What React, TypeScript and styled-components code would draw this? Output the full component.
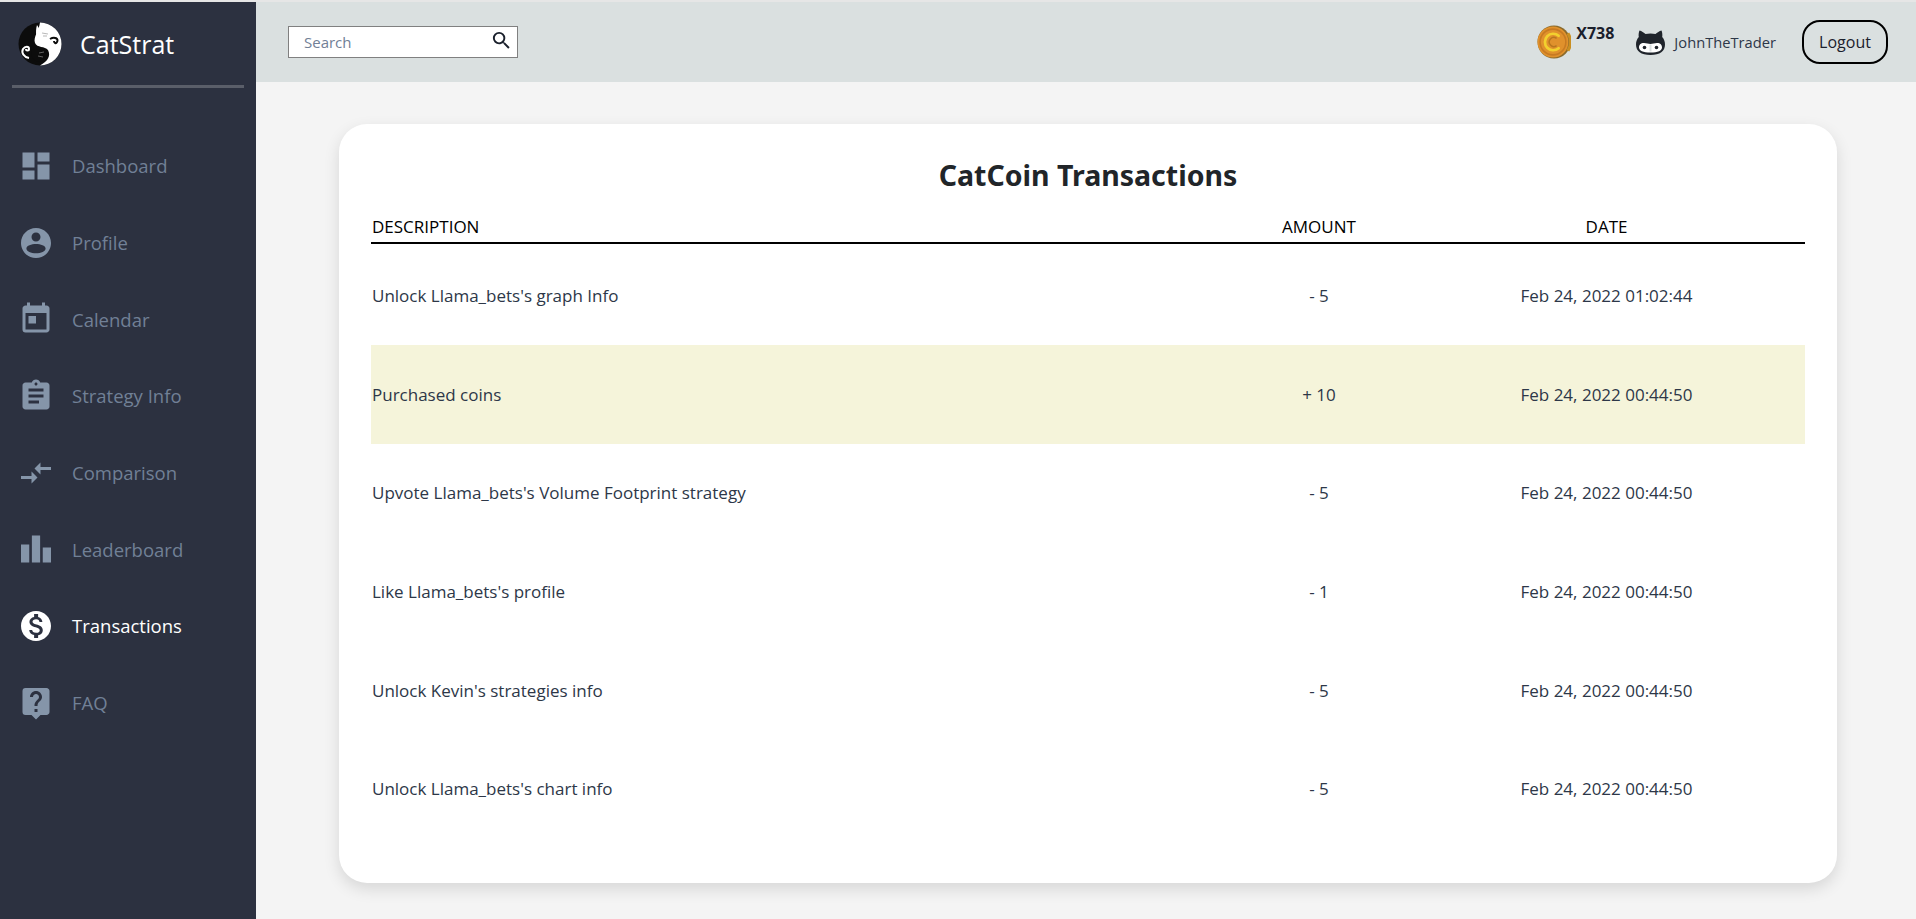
import React from "react";
import styled, { createGlobalStyle } from "styled-components";
import {
  MdAssignment,
  MdCompareArrows,
  MdDashboard,
  MdLeaderboard,
  MdLiveHelp,
  MdMonetizationOn,
  MdSearch,
  MdToday,
} from "react-icons/md";

const GlobalStyle = createGlobalStyle`
  html, body {
    margin: 0;
    height: 100%;
    background: #f4f4f4;
    overflow: hidden;
  }
  * { box-sizing: border-box; }
  #root { height: 100%; }
`;

const Page = styled.div`
  display: flex;
  flex-direction: column;
  height: 919px;
  font-family: "Open Sans", "Noto Sans", sans-serif;
  color: #2d3748;
`;

const TopStrip = styled.div`
  height: 2px;
  background: #e6e6e6;
  flex: none;
`;

const Shell = styled.div`
  display: flex;
  flex: 1;
  min-height: 0;
`;

const Sidebar = styled.aside`
  width: 256px;
  flex: none;
  background: #2c3140;
  padding: 0 12px;
`;

const Brand = styled.div`
  display: flex;
  align-items: center;
  gap: 18px;
  height: 86px;
  padding: 0 6px;
  border-bottom: 3px solid #5a5e69;
`;

const BrandName = styled.span`
  font-size: 25px;
  color: #fff;
`;

const NavList = styled.nav`
  display: flex;
  flex-direction: column;
  padding-top: 39.5px;
`;

const NavItem = styled.a<{ $active?: boolean }>`
  display: flex;
  align-items: center;
  gap: 20px;
  height: 76.7px;
  padding-left: 8px;
  font-size: 18.5px;
  color: ${(p) => (p.$active ? "#fff" : "#718096")};

  svg {
    width: 36px;
    height: 36px;
    margin-left: -2px;
    margin-right: -2px;
    flex: none;
    color: ${(p) => (p.$active ? "#fff" : "#8595a9")};
  }
`;

const Main = styled.div`
  flex: 1;
  display: flex;
  flex-direction: column;
  min-width: 0;
`;

const TopBar = styled.header`
  height: 80px;
  flex: none;
  background: #dae0e0;
  display: flex;
  align-items: center;
  padding: 0 28px 0 32px;
`;

const SearchBox = styled.div`
  width: 230px;
  height: 32px;
  background: #fff;
  border: 1px solid #808080;
  display: flex;
  align-items: center;
  justify-content: space-between;
  padding: 0 4px 0 15px;
  font-size: 15px;
  color: #718096;

  svg {
    width: 23px;
    height: 23px;
    color: #1a202c;
    margin-top: -3px;
  }
`;

const TopRight = styled.div`
  margin-left: auto;
  display: flex;
  align-items: center;
`;

const CoinGroup = styled.div`
  display: flex;
  align-items: flex-start;
  gap: 5px;
  margin-right: 22px;
`;

const CoinCount = styled.span`
  font-size: 16px;
  font-weight: 700;
  line-height: 20px;
  margin-top: -2px;
  color: #1a202c;
`;

const UserName = styled.span`
  font-size: 14.7px;
  margin-left: 9px;
  margin-right: 26px;
  color: #2d3748;
`;

const LogoutButton = styled.button`
  width: 86px;
  height: 44px;
  background: transparent;
  border: 2px solid #000;
  border-radius: 18px;
  font: inherit;
  font-size: 16px;
  color: #1a202c;
  padding: 0;
`;

const Content = styled.main`
  flex: 1;
  padding: 42px 79px 36px 83px;
  min-height: 0;
`;

const Card = styled.section`
  height: 759px;
  background: #fff;
  border-radius: 28px;
  box-shadow: 0 6px 16px rgba(0, 0, 0, 0.12);
  padding: 31px 32px 0 32px;
`;

const Title = styled.h1`
  margin: 0;
  text-align: center;
  font-family: "Noto Sans", "Open Sans", sans-serif;
  font-size: 28.5px;
  font-weight: 700;
  line-height: 40px;
  color: #212529;
`;

const Row = styled.div<{ $highlight?: boolean }>`
  display: grid;
  grid-template-columns: 859px 178px 397px;
  align-items: center;
  height: 98.6px;
  font-size: 17px;
  color: #2d3748;
  background: ${(p) => (p.$highlight ? "#f5f4da" : "transparent")};
`;

const HeaderRow = styled(Row)`
  height: 34px;
  margin-top: 15px;
  margin-bottom: 2.5px;
  border-bottom: 2px solid #000;
  font-size: 17px;
  color: #000;
`;

const Cell = styled.div<{ $center?: boolean }>`
  padding-left: ${(p) => (p.$center ? "0" : "1px")};
  text-align: ${(p) => (p.$center ? "center" : "left")};
`;

const ProfileIcon = () => (
  <svg viewBox="0 0 24 24" fill="currentColor">
    <path
      fillRule="evenodd"
      d="M12 2C6.48 2 2 6.48 2 12s4.48 10 10 10 10-4.48 10-10S17.52 2 12 2zm0 3c1.66 0 3 1.34 3 3s-1.34 3-3 3-3-1.34-3-3 1.34-3 3-3zm0 7.6c3 0 6.4 1 6.4 3 0 1.9-3 3.2-6.4 3.2s-6.4-1.3-6.4-3.2c0-2 3.4-3 6.4-3z"
    />
  </svg>
);

const CatLogo = () => (
  <svg width="44" height="44" viewBox="0 0 44 44">
    <circle cx="22" cy="22" r="21.5" fill="#0c0c0c" />
    <path
      d="M22 .5A21.5 21.5 0 0 1 22 43.5C30 39 33 34 30 28C27 24 19 26 17 21C15 15 21 9 22 .5Z"
      fill="#fff"
    />
    <path d="M19 3l3 5 8 0 3-4 1 9c-1 6-6 9-12 7-4-3-5-10-3-17Z" fill="#fff" />
    <path d="M24 11l6 1M25 14l4 0" stroke="#999" strokeWidth="0.7" />
    <path
      d="M32 17c5-3 9 0 7 3-1 2-3 1-3-1"
      fill="none"
      stroke="#0c0c0c"
      strokeWidth="2"
    />
    <path
      d="M11 36c-5-1-8-5-6-9 2-3 6-3 6 0 0 2-3 2-3 0"
      fill="none"
      stroke="#fff"
      strokeWidth="2"
    />
    <path d="M14 27l14 1c3 3 2 9-2 12l-8-1c-5-3-6-8-4-12Z" fill="#0c0c0c" />
    <path d="M21 31l5-1M20 34l5 1" stroke="#888" strokeWidth="0.7" />
  </svg>
);

const CoinIcon = () => (
  <svg width="34" height="34" viewBox="0 0 33 33">
    <circle cx="16.5" cy="16.5" r="16" fill="#8a6a2c" />
    <circle cx="15.5" cy="16.5" r="15" fill="#e0912c" />
    <path d="M30 8a16 16 0 0 1 0 17" fill="none" stroke="#c98f22" strokeWidth="3" />
    <circle cx="15.5" cy="16.5" r="12.5" fill="none" stroke="#c77a22" strokeWidth="1.5" />
    <path
      d="M21 10.5a8 8 0 1 0 0 12"
      fill="none"
      stroke="#f2d02e"
      strokeWidth="2.6"
      strokeLinecap="round"
    />
    <path
      d="M19 13a4.4 4.4 0 1 0 0 7"
      fill="none"
      stroke="#b8761e"
      strokeWidth="1.4"
    />
  </svg>
);

const CatHead = () => (
  <svg width="29" height="25" viewBox="0 0 29 25">
    <path
      d="M3.5 0.5C5.5 1 8 2.5 9.5 4C12.5 3.3 16.5 3.3 19.5 4C21 2.5 23.5 1 25.5 0.5C26.3 2.5 26.6 5 26.2 7C28 9 29 11.5 29 14.5C29 21 24 25 14.5 25C5 25 0 21 0 14.5C0 11.5 1 9 2.8 7C2.4 5 2.7 2.5 3.5 0.5Z"
      fill="#1f242b"
    />
    <path
      d="M8 13C10.5 13 12.5 14 14.5 14C16.5 14 18.5 13 21 13C24.5 13 26 15 26 17.5C26 20.5 22 22.5 14.5 22.5C7 22.5 3 20.5 3 17.5C3 15 4.5 13 8 13Z"
      fill="#fff"
    />
    <path d="M13.5 14.5h2v7h-2Z" fill="#dae0e0" />
    <circle cx="8.5" cy="17.5" r="1.8" fill="#1f242b" />
    <circle cx="20.5" cy="17.5" r="1.8" fill="#1f242b" />
  </svg>
);

const navItems = [
  { label: "Dashboard", icon: <MdDashboard /> },
  { label: "Profile", icon: <ProfileIcon /> },
  { label: "Calendar", icon: <MdToday /> },
  { label: "Strategy Info", icon: <MdAssignment /> },
  { label: "Comparison", icon: <MdCompareArrows /> },
  { label: "Leaderboard", icon: <MdLeaderboard /> },
  { label: "Transactions", icon: <MdMonetizationOn />, active: true },
  { label: "FAQ", icon: <MdLiveHelp /> },
];

const transactions = [
  { description: "Unlock Llama_bets's graph Info", amount: "- 5", date: "Feb 24, 2022 01:02:44" },
  { description: "Purchased coins", amount: "+ 10", date: "Feb 24, 2022 00:44:50", purchased: true },
  { description: "Upvote Llama_bets's Volume Footprint strategy", amount: "- 5", date: "Feb 24, 2022 00:44:50" },
  { description: "Like Llama_bets's profile", amount: "- 1", date: "Feb 24, 2022 00:44:50" },
  { description: "Unlock Kevin's strategies info", amount: "- 5", date: "Feb 24, 2022 00:44:50" },
  { description: "Unlock Llama_bets's chart info", amount: "- 5", date: "Feb 24, 2022 00:44:50" },
];

function App() {
  return (
    <Page>
      <GlobalStyle />
      <TopStrip />
      <Shell>
        <Sidebar>
          <Brand>
            <CatLogo />
            <BrandName>CatStrat</BrandName>
          </Brand>
          <NavList>
            {navItems.map((item) => (
              <NavItem key={item.label} $active={item.active}>
                {item.icon}
                {item.label}
              </NavItem>
            ))}
          </NavList>
        </Sidebar>
        <Main>
          <TopBar>
            <SearchBox>
              Search
              <MdSearch />
            </SearchBox>
            <TopRight>
              <CoinGroup>
                <CoinIcon />
                <CoinCount>X738</CoinCount>
              </CoinGroup>
              <CatHead />
              <UserName>JohnTheTrader</UserName>
              <LogoutButton>Logout</LogoutButton>
            </TopRight>
          </TopBar>
          <Content>
            <Card>
              <Title>CatCoin Transactions</Title>
              <HeaderRow>
                <Cell>DESCRIPTION</Cell>
                <Cell $center>AMOUNT</Cell>
                <Cell $center>DATE</Cell>
              </HeaderRow>
              {transactions.map((tx) => (
                <Row key={tx.description} $highlight={tx.purchased}>
                  <Cell>{tx.description}</Cell>
                  <Cell $center>{tx.amount}</Cell>
                  <Cell $center>{tx.date}</Cell>
                </Row>
              ))}
            </Card>
          </Content>
        </Main>
      </Shell>
    </Page>
  );
}

export default App;
